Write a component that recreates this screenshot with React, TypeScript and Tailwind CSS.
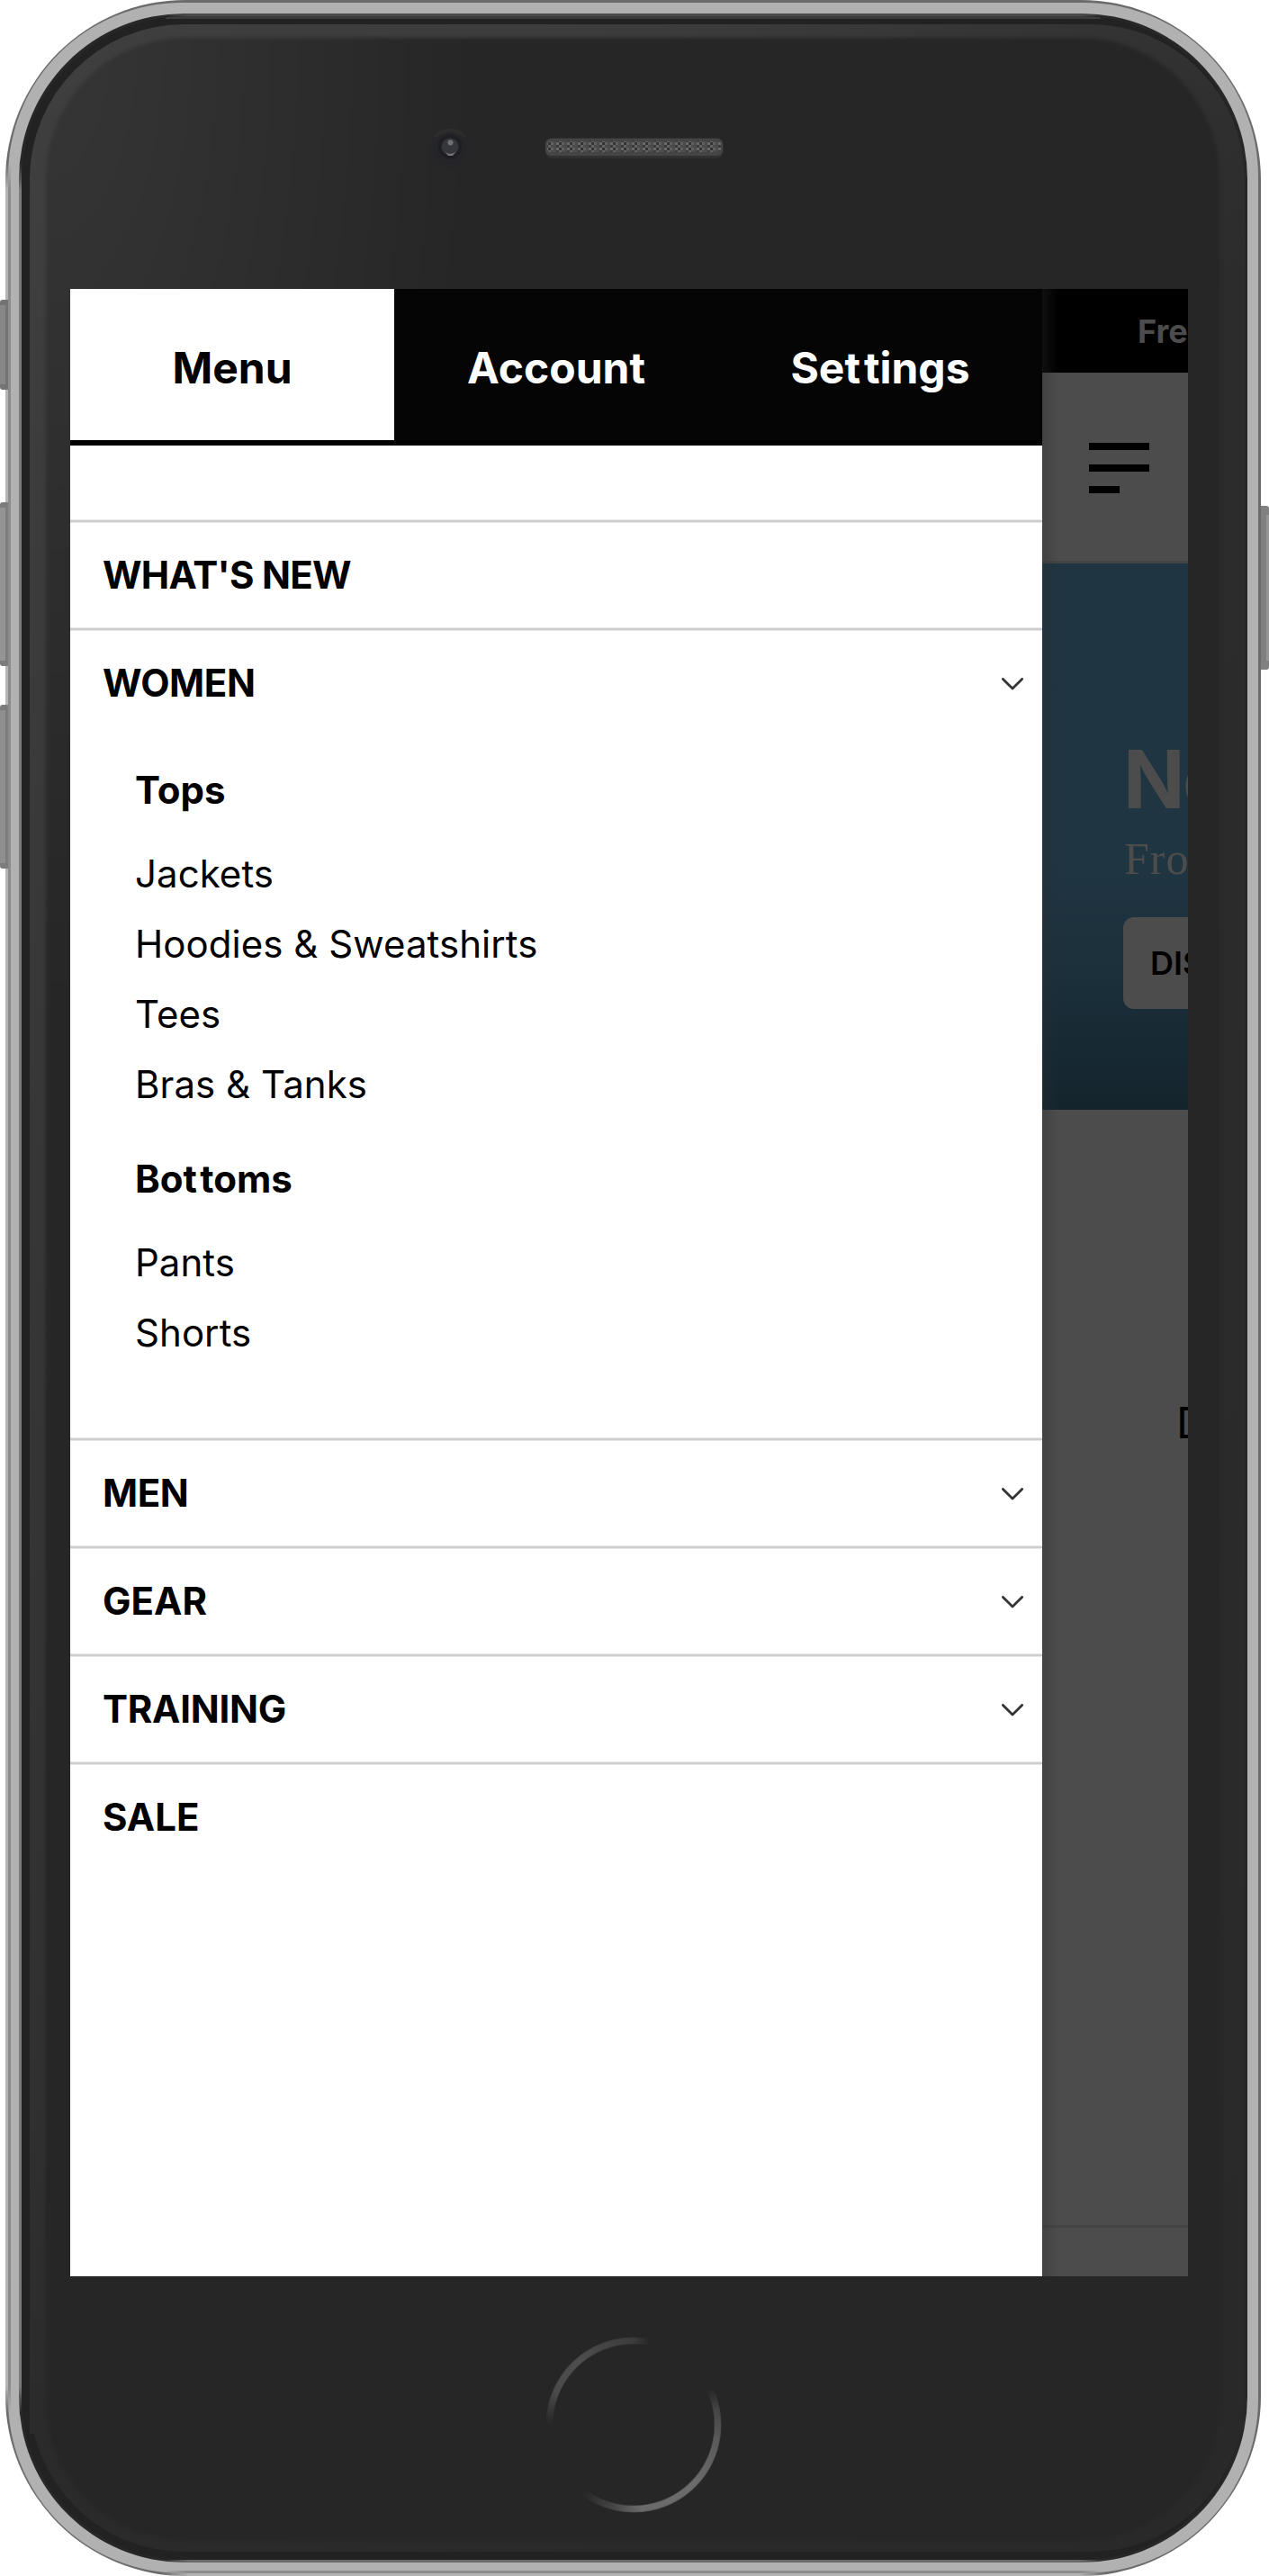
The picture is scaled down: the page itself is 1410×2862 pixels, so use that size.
import React from "react";

type Section = {
  title: string;
  tracking?: string;
  expandable?: boolean;
  groups?: { title: string; items: string[] }[];
};

const sections: Section[] = [
  { title: "WHAT'S NEW", tracking: "tracking-[-0.75px]" },
  {
    title: "WOMEN",
    tracking: "tracking-[-0.4px]",
    expandable: true,
    groups: [
      { title: "Tops", items: ["Jackets", "Hoodies & Sweatshirts", "Tees", "Bras & Tanks"] },
      { title: "Bottoms", items: ["Pants", "Shorts"] },
    ],
  },
  { title: "MEN", tracking: "tracking-[-0.5px]", expandable: true },
  { title: "GEAR", expandable: true },
  { title: "TRAINING", tracking: "tracking-[-0.25px]", expandable: true },
  { title: "SALE" },
];

/* Opens up the tight kerning of a double t in bold labels. */
function Label({ text }: { text: string }) {
  const at = text.indexOf("tt");
  if (at < 0) return <span>{text}</span>;
  return (
    <span>
      {text.slice(0, at)}
      <span className="tracking-[0.08em]">t</span>
      {text.slice(at + 1)}
    </span>
  );
}

function Chevron() {
  return (
    <svg className="mt-px mr-[21px] h-[14px] w-6" viewBox="0 0 24 14" fill="none">
      <path d="M1.4 1.4 12 12 22.6 1.4" stroke="#333436" strokeWidth="2.8" strokeLinecap="round" strokeLinejoin="round" />
    </svg>
  );
}

function NavSection({ title, tracking = "tracking-normal", expandable, groups }: Section) {
  return (
    <li>
      <div className="h-1 border-y border-[#e8e8e8] bg-[#cdcdcd]" />
      <div className="flex h-[116px] items-center justify-between pl-9">
        <span className={`text-[42px] leading-none font-bold ${tracking}`}>{title}</span>
        {expandable && <Chevron />}
      </div>
      {groups && (
        <div className="flex flex-col gap-[27px] pt-[22px] pb-[77px] pl-[72px] text-[42px] leading-[78px]">
          {groups.map((g) => (
            <div key={g.title}>
              <h3 className="mb-[15px] font-bold">
                <Label text={g.title} />
              </h3>
              <ul>
                {g.items.map((i) => (
                  <li key={i} className="tracking-[0.05px]">{i}</li>
                ))}
              </ul>
            </div>
          ))}
        </div>
      )}
    </li>
  );
}

function Drawer() {
  return (
    <div className="relative z-10 flex h-full w-[1080px] shrink-0 flex-col bg-white text-black">
      <div className="flex h-[174px] border-b-[6px] border-black bg-[#050505] text-[48px] font-bold text-white">
        <div className="flex w-[360px] items-center justify-center bg-white pt-[7px] text-black">Menu</div>
        <div className="flex w-[360px] items-center justify-center pt-[7px]">Account</div>
        <div className="flex w-[360px] items-center justify-center pt-[7px]">
          <Label text="Settings" />
        </div>
      </div>
      <ul className="pt-[82px]">
        {sections.map((s) => (
          <NavSection key={s.title} {...s} />
        ))}
      </ul>
      <div className="absolute top-0 left-full h-full w-[18px] bg-linear-to-r from-[rgba(45,45,45,0.34)] to-transparent" />
    </div>
  );
}

function ShopPage() {
  return (
    <div className="flex h-full w-[162px] shrink-0 flex-col overflow-hidden bg-[#4c4c4c] whitespace-nowrap">
      <div className="flex h-[93px] shrink-0 items-center bg-black pl-[106px] text-[36px] font-bold text-[#4c4c4c]">
        Free
      </div>
      <div className="flex h-[212px] shrink-0 flex-col gap-4 border-b-[3px] border-[#444] pt-[78px] pl-[52px]">
        <div className="h-2 w-[67px] shrink-0 bg-black" />
        <div className="h-2 w-[67px] shrink-0 bg-black" />
        <div className="h-2 w-[34px] shrink-0 bg-black" />
      </div>
      <div className="flex h-[607px] shrink-0 flex-col items-start bg-linear-to-b from-[#1f3541] from-55% via-[#1b303b] via-75% to-[#14242d] pt-[195px] pl-[90px] text-[#4c4c4c]">
        <div className="text-[90px] leading-[90px] font-bold tracking-[-0.03em]">New</div>
        <div className="mt-[13px] ml-[1px] font-['Liberation_Serif',serif] text-[50px] leading-[60px] tracking-[0.02em]">From</div>
        <div className="mt-[35px] flex h-[102px] items-center rounded-[12px] bg-[#4c4c4c] px-[30px] text-[36px] font-semibold text-black">
          DISCOVER
        </div>
      </div>
      <div className="shrink-0 pt-[318px] pl-[149px] text-[48px] leading-[60px] text-black">D</div>
      <div className="mt-auto h-[57px] shrink-0 border-t-[3px] border-[#444]" />
    </div>
  );
}

function Bezel({ children }: { children: React.ReactNode }) {
  return (
    <div className="ml-[6px] h-[2862px] w-[1395px] rounded-[200px] p-[3px] [background:linear-gradient(transparent,#b5b5b5_30px,#b5b5b5_2470px,transparent)_left_center/3px_2500px_no-repeat,linear-gradient(90deg,transparent,#b2b2b2_30px,#b2b2b2_1020px,transparent)_center_bottom/1050px_3px_no-repeat,#6b6b6b]">
      <div className="h-full rounded-[193px] p-3 [background:linear-gradient(transparent,#8c8c8c_30px,#8c8c8c_2470px,transparent)_left_center/3px_2500px_no-repeat,linear-gradient(90deg,transparent,#8c8c8c_30px,#8c8c8c_1020px,transparent)_center_bottom/1050px_3px_no-repeat,#b1b1b1]">
        <div className="h-full rounded-[184px] p-[3px] [background:linear-gradient(transparent,#7b7b7b_30px,#7b7b7b_2470px,transparent)_left_center/3px_2500px_no-repeat,linear-gradient(90deg,transparent,#6b6b6b_30px,#6b6b6b_1020px,transparent)_center_bottom/1050px_3px_no-repeat,linear-gradient(90deg,transparent,#4c4c4c_30px,#4c4c4c_1020px,transparent)_center_top/1050px_3px_no-repeat,#272727]">
          <div className="relative h-full overflow-hidden rounded-[182px] bg-[#222]">
            <div className="absolute top-0 right-[160px] left-[160px] h-[3px] bg-[#3c3c3c]" />
            <div className="absolute top-[9px] right-0 bottom-[9px] left-[9px] rounded-[172px] [background:linear-gradient(135deg,#3f3f3f_0,#3c3c3c_500px,#2c2c2c_1150px,#292929_100%)]" />
            <div className="absolute top-[180px] bottom-[140px] left-[9px] w-[18px] [background:linear-gradient(#3f3f3f,#383838_35%,#303030_85%,#2b2b2b)]" />
            <div className="absolute top-[24px] right-[28px] bottom-[22px] left-[27px] rounded-[155px] bg-[#262626] [background-image:radial-gradient(480px_1100px_at_0_0,#363636,#262626)] blur-[2px]" />
            <div className="relative flex h-full flex-col">{children}</div>
          </div>
        </div>
      </div>
    </div>
  );
}

function Camera() {
  return (
    <svg className="h-[60px] w-[60px]" viewBox="0 0 60 60">
      <defs>
        <radialGradient id="halo">
          <stop offset="0.5" stopColor="#242429" />
          <stop offset="1" stopColor="#262627" stopOpacity="0" />
        </radialGradient>
      </defs>
      <circle cx="30" cy="33" r="27" fill="url(#halo)" />
      <path d="M13 19q17-15 34 0" stroke="#2d2d2e" strokeWidth="4" fill="none" />
      <circle cx="30" cy="30" r="13.5" fill="#1f1f23" />
      <circle cx="30" cy="30" r="9.5" fill="#36373d" />
      <circle cx="30.5" cy="25.5" r="3" fill="#707174" />
      <path d="M25 36q5 4 11 0l-3 4h-5z" fill="#78787a" />
    </svg>
  );
}

function Speaker() {
  return (
    <svg className="h-[24px] w-[200px]" viewBox="0 0 200 24">
      <defs>
        <pattern id="mesh" width="12" height="6" patternUnits="userSpaceOnUse">
          <rect width="12" height="6" fill="#4b4b4b" />
          <rect width="3" height="3" fill="#6a6a6a" />
          <rect x="3" y="3" width="3" height="3" fill="#626262" />
          <rect x="6" width="3" height="3" fill="#606060" />
          <rect x="3" width="3" height="3" fill="#333" />
          <rect y="3" width="3" height="3" fill="#3a3a3a" />
        </pattern>
      </defs>
      <rect x="0" y="1" width="198" height="23" rx="8" fill="#303030" />
      <rect x="0" y="2" width="197" height="19" rx="6" fill="#454545" />
      <rect x="2" y="5" width="193" height="12" rx="4" fill="url(#mesh)" />
    </svg>
  );
}

function HomeButton() {
  return (
    <div className="h-[196px] w-[196px] rounded-full blur-[1px] [background:conic-gradient(#3c3c3c_0deg,#262626_11deg,#262626_65deg,#454545_80deg,#5a5a5a_100deg,#6c6c6c_135deg,#6a6a6a_175deg,#444_195deg,#262626_216deg,#262626_270deg,#4a4a4a_292deg,#4e4e4e_320deg,#404040_350deg,#3c3c3c_360deg)] [mask-image:radial-gradient(circle,transparent_89px,black_90.5px,black_97px,transparent_98px)]" />
  );
}

export default function App() {
  return (
    <div className="relative h-[2862px] w-[1410px] overflow-hidden bg-white font-['Inter',sans-serif]">
      <div className="absolute top-[333px] left-0 h-[100px] w-[9px] rounded-l-[3px] border-y-[6px] border-r-[3px] border-[#747474] bg-[#868686]" />
      <div className="absolute top-[558px] left-0 h-[182px] w-[9px] rounded-l-[3px] border-y-[6px] border-r-[3px] border-[#7c7c7c] bg-[#949494]" />
      <div className="absolute top-[783px] left-0 h-[182px] w-[9px] rounded-l-[3px] border-y-[6px] border-r-[3px] border-[#7c7c7c] bg-[#8f8f8f]" />
      <div className="absolute top-[562px] right-0 h-[182px] w-[9px] rounded-r-[3px] border-y-[10px] border-l-[6px] border-[#808080] bg-[#969696]" />
      <Bezel>
        <div className="flex h-[303px] shrink-0 items-start gap-[76px] pt-[115px] pl-[446px]">
          <Camera />
          <div className="pt-[19px]">
            <Speaker />
          </div>
        </div>
        <div className="ml-[54px] flex h-[2208px] w-[1242px] shrink-0 overflow-hidden">
          <Drawer />
          <ShopPage />
        </div>
        <div className="flex pt-[67px] pl-[582px]">
          <HomeButton />
        </div>
      </Bezel>
    </div>
  );
}
